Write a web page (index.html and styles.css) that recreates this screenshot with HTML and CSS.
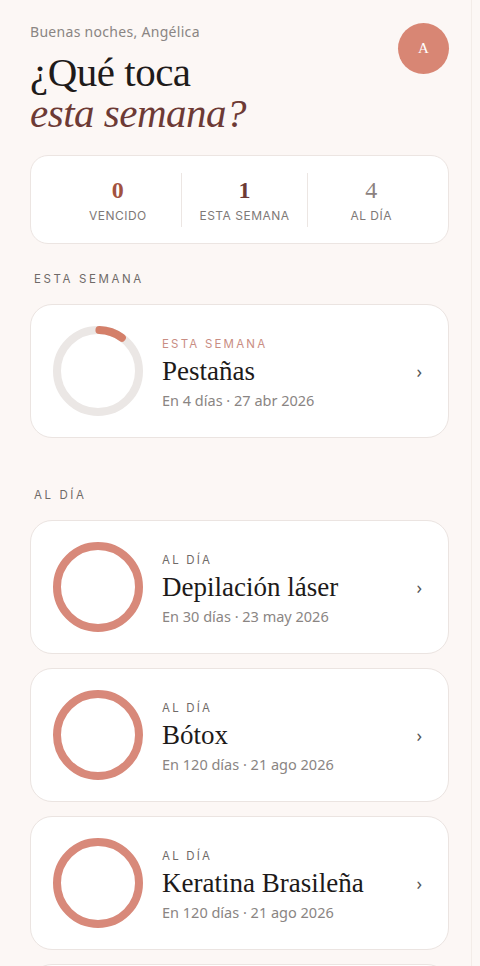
FILE: index.html
```html
<!DOCTYPE html>
<html lang="es">
    <head>
        <meta charset="UTF-8">
        <meta name="viewport" content="width=device-width, initial-scale=1.0">
        <title>Tratamientos</title>
        <link rel="stylesheet" href="styles.css">
    </head>
    <body>
        <div class="page">
            <div class="header">
                <div>
                    <p class="greeting">Buenas noches, Angélica</p>
                    <h1 class="title">¿Qué toca<br><em>esta semana?</em></h1>
                </div>
                <div class="avatar">A</div>
            </div>

            <div class="stats">
                <div class="stat">
                    <span class="num late">0</span>
                    <span class="label">Vencido</span>
                </div>
                <div class="stat">
                    <span class="num week">1</span>
                    <span class="label">Esta semana</span>
                </div>
                <div class="stat">
                    <span class="num ok">4</span>
                    <span class="label">Al día</span>
                </div>
            </div>

            <h2 class="section">Esta semana</h2>
            <div class="card">
                <svg class="ring" width="90" height="90" viewBox="0 0 90 90">
                    <circle cx="45" cy="45" r="41" class="track"/>
                    <circle cx="45" cy="45" r="41" class="arc" stroke-dasharray="24 300" transform="rotate(-88 45 45)"/>
                </svg>
                <div class="info">
                    <span class="tag pink">Esta semana</span>
                    <span class="name">Pestañas</span>
                    <span class="when">En 4 días · 27 abr 2026</span>
                </div>
                <span class="chev">›</span>
            </div>

            <h2 class="section">Al día</h2>
            <div class="list">
                <div class="card">
                    <svg class="ring" width="90" height="90" viewBox="0 0 90 90">
                        <circle cx="45" cy="45" r="41" class="full"/>
                    </svg>
                    <div class="info">
                        <span class="tag">Al día</span>
                        <span class="name">Depilación láser</span>
                        <span class="when">En 30 días · 23 may 2026</span>
                    </div>
                    <span class="chev">›</span>
                </div>
                <div class="card">
                    <svg class="ring" width="90" height="90" viewBox="0 0 90 90">
                        <circle cx="45" cy="45" r="41" class="full"/>
                    </svg>
                    <div class="info">
                        <span class="tag">Al día</span>
                        <span class="name">Bótox</span>
                        <span class="when">En 120 días · 21 ago 2026</span>
                    </div>
                    <span class="chev">›</span>
                </div>
                <div class="card">
                    <svg class="ring" width="90" height="90" viewBox="0 0 90 90">
                        <circle cx="45" cy="45" r="41" class="full"/>
                    </svg>
                    <div class="info">
                        <span class="tag">Al día</span>
                        <span class="name">Keratina Brasileña</span>
                        <span class="when">En 120 días · 21 ago 2026</span>
                    </div>
                    <span class="chev">›</span>
                </div>
                <div class="card">
                    <svg class="ring" width="90" height="90" viewBox="0 0 90 90">
                        <circle cx="45" cy="45" r="41" class="full"/>
                    </svg>
                    <div class="info">
                        <span class="tag">Al día</span>
                        <span class="name">Manicura</span>
                        <span class="when">En 120 días · 21 ago 2026</span>
                    </div>
                    <span class="chev">›</span>
                </div>
            </div>
        </div>
    </body>
</html>
```

FILE: styles.css
```css
body {
    margin: 0;
    background: #fcf7f5;
    font-family: "Noto Sans", "Lato", sans-serif;
    color: #222;
}
.page {
    width: 472px;
    box-sizing: border-box;
    padding: 22px 22px 0 30px;
    border-right: 1px solid #f3ece8;
    min-height: 100vh;
}
.header {
    display: flex;
    justify-content: space-between;
    align-items: flex-start;
}
.greeting {
    margin: 0;
    font-size: 14px;
    line-height: 20px;
    color: #8a8583;
    letter-spacing: 0.3px;
}
.title {
    margin: 10px 0 0;
    font-family: "Liberation Serif", serif;
    font-weight: normal;
    font-size: 41px;
    line-height: 41px;
    color: #1f1b1a;
    letter-spacing: -0.5px;
}
.title em {
    color: #6d3a35;
}
.avatar {
    width: 51px;
    height: 51px;
    border-radius: 50%;
    background: #d88674;
    color: #fff;
    font-family: "Liberation Serif", serif;
    font-size: 15px;
    display: flex;
    align-items: center;
    justify-content: center;
    margin-top: 1px;
}
.stats {
    margin-top: 21px;
    display: flex;
    background: #fff;
    border: 1px solid #ece5e2;
    border-radius: 18px;
    height: 87px;
    align-items: center;
    padding: 0 14px 0 24px;
}
.stat {
    flex: 1;
    display: flex;
    flex-direction: column;
    align-items: center;
    border-left: 1px solid #ece6e3;
    padding: 4px 0;
}
.stat:first-child {
    border-left: none;
}
.num {
    font-family: "Liberation Serif", serif;
    font-size: 24px;
    line-height: 26px;
    font-weight: bold;
}
.late { color: #a2523f; }
.week { color: #6d3a35; }
.ok { color: #8c8280; font-weight: normal; }
.label {
    margin-top: 5px;
    font-family: "Inter", sans-serif;
    font-size: 12px;
    text-transform: uppercase;
    letter-spacing: 0.5px;
    color: #7e7977;
}
.section {
    margin: 28px 0 0 4px;
    font-family: "Inter", sans-serif;
    font-weight: normal;
    font-size: 11.5px;
    line-height: 14px;
    letter-spacing: 2.6px;
    text-transform: uppercase;
    color: #6f6a68;
}
.card {
    display: flex;
    align-items: center;
    background: #fff;
    border: 1px solid #ebe4e1;
    border-radius: 22px;
    height: 132px;
    padding: 0 22px;
    margin-top: 18px;
}
.list .card {
    margin-top: 0;
    margin-bottom: 14px;
}
.list {
    margin-top: 18px;
}
.card + .section {
    margin-top: 50px;
}
.ring {
    flex: none;
    fill: none;
}
.track {
    stroke: #ebe7e5;
    stroke-width: 8;
}
.arc {
    stroke: #d47f69;
    stroke-width: 8;
    stroke-linecap: round;
}
.full {
    stroke: #d8897a;
    stroke-width: 8;
}
.info {
    flex: 1;
    display: flex;
    flex-direction: column;
    margin-left: 19px;
    padding-top: 4px;
}
.tag {
    font-family: "Inter", sans-serif;
    font-size: 11.5px;
    letter-spacing: 2.2px;
    text-transform: uppercase;
    color: #6f6a68;
    line-height: 16px;
}
.tag.pink {
    color: #c98d83;
}
.name {
    font-family: "Liberation Serif", serif;
    font-size: 27px;
    line-height: 32px;
    color: #1d1a19;
    margin-top: 3px;
}
.when {
    font-size: 14.5px;
    line-height: 20px;
    color: #8a8583;
    margin-top: 3px;
}
.chev {
    font-size: 18px;
    color: #555;
    margin-right: 4px;
}
```
